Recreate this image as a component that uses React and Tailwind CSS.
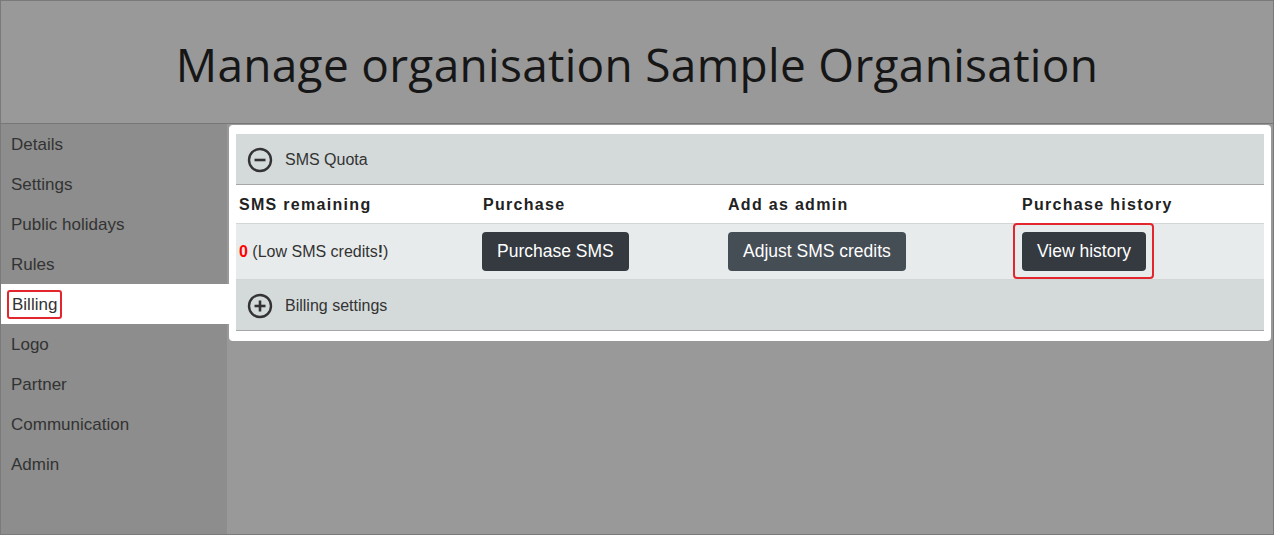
import React from "react";

const Circle = ({ plus }) => (
  <svg width="26" height="26" viewBox="0 0 26 26" fill="none">
    <circle cx="13" cy="13" r="11" stroke="#333" strokeWidth="2.4" />
    <line x1="7.5" y1="13" x2="18.5" y2="13" stroke="#333" strokeWidth="2.6" />
    {plus && <line x1="13" y1="7.5" x2="13" y2="18.5" stroke="#333" strokeWidth="2.6" />}
  </svg>
);

const items = ["Details", "Settings", "Public holidays", "Rules", "Billing", "Logo", "Partner", "Communication", "Admin"];

export default function App() {
  const arial = { fontFamily: '"Liberation Sans", Arial, sans-serif' };
  return (
    <div className="w-[1274px] h-[535px] border border-[#7a7a7a] bg-[#999999] flex flex-col overflow-hidden" style={arial}>
      <header className="h-[123px] shrink-0 border-b border-[#777] flex items-center justify-center">
        <h1 className="text-[46px] text-[#161616] font-normal tracking-[0.3px] mt-[4px]" style={{ fontFamily: '"Open Sans", sans-serif' }}>
          Manage organisation Sample Organisation
        </h1>
      </header>
      <div className="flex flex-1">
        <nav className="w-[226px] shrink-0 bg-[#8c8d8c] flex flex-col">
          {items.map((it) =>
            it === "Billing" ? (
              <div key={it} className="h-[40px] bg-white w-[229px] flex items-center pl-[6px] pt-[1px]">
                <span className="border-2 border-[#e3262e] rounded-[3px] px-[3px] leading-[25px] text-[17px] text-[#333]">Billing</span>
              </div>
            ) : (
              <div key={it} className="h-[40px] flex items-center pl-[10px] pt-[1px] text-[17px] text-[#333]">
                {it}
              </div>
            )
          )}
        </nav>
        <main className="flex-1 pl-[2px] pr-[2px] pt-px">
          <div className="bg-white rounded-[4px] h-[216px] px-[7px] pt-[9px]">
            <div className="h-[51px] bg-[#d4dada] border-b border-[#a6a6a6] flex items-center pl-[11px] pt-[1px] gap-[12px]">
              <Circle />
              <span className="text-[16px] text-[#333]">SMS Quota</span>
            </div>
            <div className="grid grid-cols-[244px_245px_294px_1fr] h-[39px] items-center pt-[1px] border-b border-[#d2d6d6] text-[16px] font-bold text-[#222] tracking-[1.3px]">
              <div className="pl-[3px]">SMS remaining</div>
              <div className="pl-[3px]">Purchase</div>
              <div className="pl-[3px]">Add as admin</div>
              <div className="pl-[3px]">Purchase history</div>
            </div>
            <div className="grid grid-cols-[244px_245px_294px_1fr] h-[56px] items-center bg-[#e8ebeb] border-b border-[#d2d6d6]">
              <div className="pl-[3px] text-[16px] text-[#333]">
                <span className="text-[#ff0000] font-bold">0</span> (Low SMS credits<b>!</b>)
              </div>
              <div className="pl-[2px]">
                <button className="h-[39px] px-[15px] rounded-[4px] bg-[#343a40] text-white text-[17.5px]">Purchase SMS</button>
              </div>
              <div className="pl-[3px]">
                <button className="h-[39px] px-[15px] rounded-[4px] bg-[#454d55] text-white text-[17.5px]">Adjust SMS credits</button>
              </div>
              <div className="pl-[3px]">
                <span className="relative inline-block">
                  <span className="absolute -left-[9px] -right-[8px] -top-[9px] -bottom-[8px] border-2 border-[#e3262e] rounded-[4px]" />
                  <button className="relative h-[39px] px-[15px] rounded-[4px] bg-[#343a40] text-white text-[17.5px]">View history</button>
                </span>
              </div>
            </div>
            <div className="h-[51px] bg-[#d4dada] border-b border-[#a6a6a6] flex items-center pl-[11px] pt-[1px] gap-[12px]">
              <Circle plus />
              <span className="text-[16px] text-[#333]">Billing settings</span>
            </div>
          </div>
        </main>
      </div>
    </div>
  );
}
